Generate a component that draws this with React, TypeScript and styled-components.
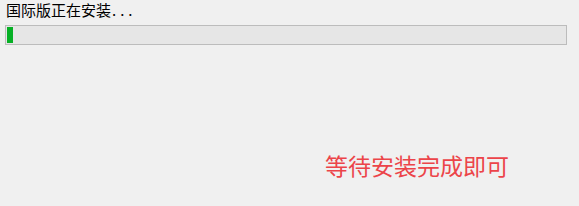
import React from 'react'
import styled, { createGlobalStyle } from 'styled-components'

const GlobalStyle = createGlobalStyle`
  html, body {
    margin: 0;
    padding: 0;
    background: #f0f0f0;
  }
`

const Window = styled.div`
  width: 579px;
  height: 206px;
  background: #f0f0f0;
  box-sizing: border-box;
  padding: 0 12px 0 5px;
  display: flex;
  flex-direction: column;
  font-family: "Noto Sans CJK SC", "Liberation Sans", sans-serif;
`

const Status = styled.div`
  font-size: 15px;
  line-height: 19px;
  color: #000;
  height: 25px;
  padding-left: 1px;
  white-space: nowrap;
`

const Dots = styled.span`
  letter-spacing: 4px;
  margin-left: 1px;
`

const Track = styled.div`
  height: 20px;
  box-sizing: border-box;
  border: 1px solid #bcbcbc;
  background: #e6e6e6;
  padding: 1px;
  display: flex;
`

const Fill = styled.div`
  height: 100%;
  background: #06b025;
`

const Footer = styled.div`
  display: flex;
  padding-left: 320px;
  padding-top: 105px;
`

const Notice = styled.div`
  font-size: 23px;
  line-height: 30px;
  color: #ec4449;
`

export default function App() {
  const progress = 1
  return (
    <>
      <GlobalStyle />
      <Window>
        <Status>
          国际版正在安装<Dots>...</Dots>
        </Status>
        <Track>
          <Fill style={{ width: `${progress}%` }} />
        </Track>
        <Footer>
          <Notice>等待安装完成即可</Notice>
        </Footer>
      </Window>
    </>
  )
}
